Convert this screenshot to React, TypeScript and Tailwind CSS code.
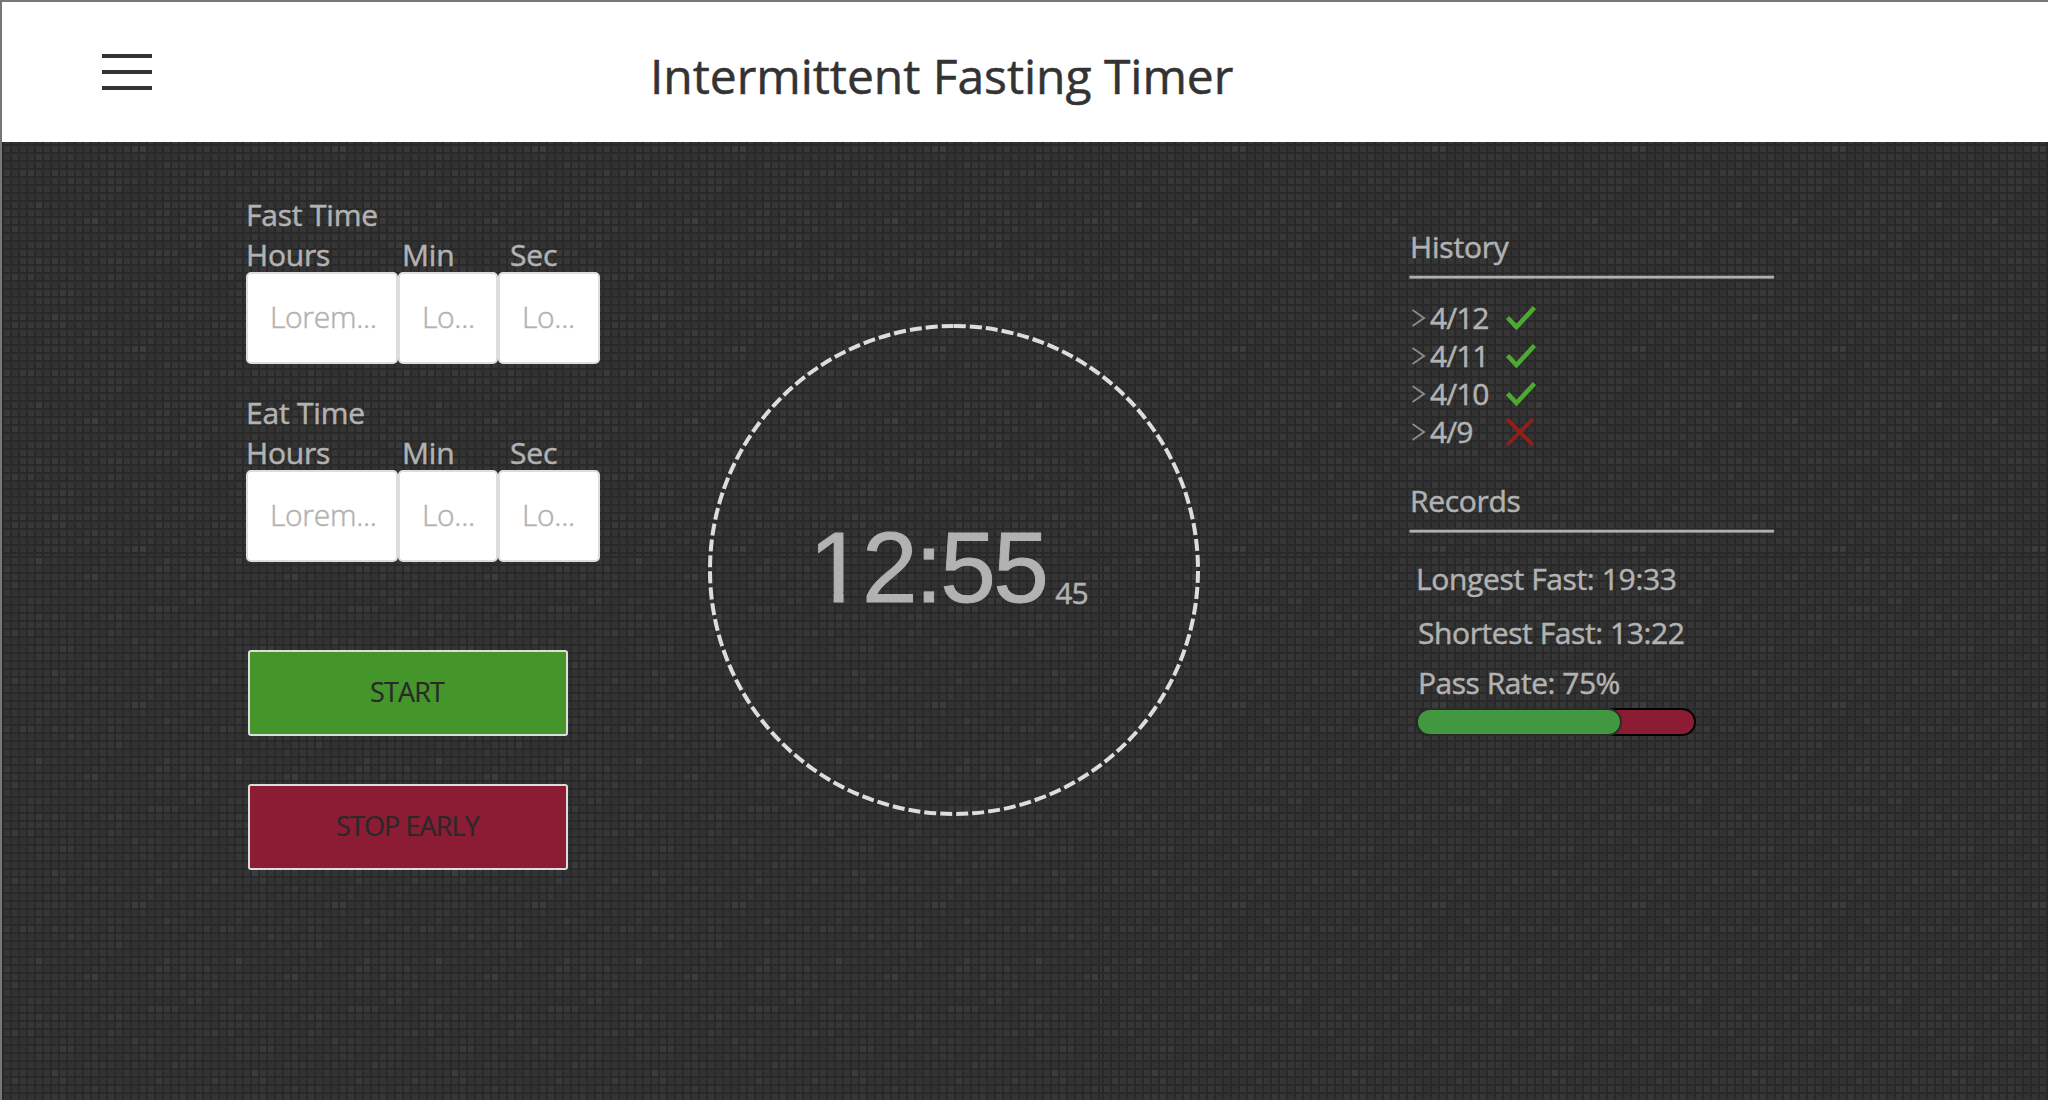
import React from "react";

const CELL = 8;
const TILE = 25;

// Cells of the backdrop tile that stand out from the rest, as [column, row].
const highlights: [number, number][] = [
  [17, 18], [16, 18], [6, 14], [4, 0], [11, 2], [10, 2], [13, 21], [3, 21], [2, 21], [6, 21],
  [14, 7], [13, 7], [8, 22], [20, 0], [4, 7], [6, 7], [11, 16], [14, 23], [0, 1], [20, 1],
  [19, 1], [1, 3], [7, 11], [8, 11], [21, 13], [1, 15], [19, 15], [7, 15], [22, 2], [18, 6],
  [19, 6], [20, 6], [21, 6], [3, 9], [1, 9], [13, 9], [20, 20], [24, 5], [23, 5], [16, 10],
  [22, 4], [0, 21],
];
const strong = 5;

const cells = Array.from({ length: TILE * TILE }, (_, i) => {
  const col = i % TILE;
  const row = Math.floor(i / TILE);
  const v = Math.abs(Math.sin(col * 12.9898 + row * 78.233) * 43758.5453) % 1;
  const shades = ["#323232", "#333333", "#353535", "#363636"];
  const rank = highlights.findIndex(([c, r]) => c === col && r === row);
  const fill = rank < 0 ? shades[Math.floor(v * 4)] : rank < strong ? "#3c3c3c" : "#393939";
  return { x: col * CELL + 4, y: row * CELL + 2, fill };
});

function Backdrop() {
  return (
    <svg className="absolute inset-0 h-full w-full" viewBox="2 142 2046 958" preserveAspectRatio="xMinYMin slice" aria-hidden="true">
      <defs>
        <pattern id="weave" width="200" height="200" patternUnits="userSpaceOnUse">
          <rect width="200" height="200" fill="#292929" />
          {cells.map((c, i) => (
            <rect key={i} x={c.x} y={c.y} width="6" height="6" fill={c.fill} />
          ))}
          {cells
            .filter((c) => c.x === 196)
            .map((c) => (
              <rect key={c.y} x="-4" y={c.y} width="6" height="6" fill={c.fill} />
            ))}
        </pattern>
        <rect id="sheet" width="1100" height="556" fill="url(#weave)" />
      </defs>
      <use href="#sheet" />
      <use href="#sheet" x="1100" />
      <use href="#sheet" y="556" />
      <use href="#sheet" x="1100" y="556" />
    </svg>
  );
}

function Field({ text, className }: { text: string; className: string }) {
  return (
    <div
      className={`h-[92px] rounded-[5px] border-2 border-[#dddddd] bg-white pl-[22px] font-light leading-[86px] tracking-[-0.3px] ${className}`}
    >
      {text}
    </div>
  );
}

function TimeFields({ title }: { title: string }) {
  return (
    <section className="h-[198px] tracking-[-0.2px]">
      <h2 className="leading-10">{title}</h2>
      <div className="flex h-[37px] leading-10">
        <span className="w-[156px]">Hours</span>
        <span className="w-[108px]">Min</span>
        <span>Sec</span>
      </div>
      <div className="flex">
        <Field text="Lorem..." className="w-[152px]" />
        <Field text="Lo..." className="w-[100px]" />
        <Field text="Lo..." className="w-[102px]" />
      </div>
    </section>
  );
}

function Check() {
  return (
    <svg width="30" height="24" viewBox="0 0 30 24" fill="none">
      <path d="M1.5 11.5 L10.5 21 L28.5 1.5" stroke="#4caa30" strokeWidth="4.6" />
    </svg>
  );
}

function Cross() {
  return (
    <svg width="28" height="28" viewBox="0 0 28 28" fill="none">
      <path d="M1 1 L27 27 M27 1 L1 27" stroke="#951f17" strokeWidth="3.6" />
    </svg>
  );
}

const history = [
  { date: "4/12", passed: true },
  { date: "4/11", passed: true },
  { date: "4/10", passed: true },
  { date: "4/9", passed: false },
];

function Rule() {
  return (
    <div className="-mt-[9px] h-[19px] whitespace-nowrap leading-5 tracking-[0.87px] [-webkit-text-stroke:0.9px]">
      {"_".repeat(26)}
    </div>
  );
}

export default function App() {
  return (
    <div className="flex h-[1100px] w-[2048px] flex-col overflow-hidden border-l-2 border-t-2 border-[#777777] bg-[#2d2d2d] font-['Open_Sans',sans-serif] text-[30px] text-[#b2b2b2] [-webkit-text-stroke:0.5px]">
      <header className="flex h-[140px] shrink-0 bg-white text-[#333333]">
        <button className="mt-[52px] ml-[100px] flex h-9 w-[50px] flex-col justify-between" aria-label="Menu">
          <span className="h-1 w-full bg-[#333333]" />
          <span className="h-1 w-full bg-[#333333]" />
          <span className="h-1 w-full bg-[#333333]" />
        </button>
        <h1 className="mt-[41px] ml-[498px] whitespace-nowrap text-[48px] leading-[66px] tracking-[-0.04px]">Intermittent Fasting Timer</h1>
      </header>

      <main className="relative flex-1">
        <Backdrop />
        <div className="relative flex">
          <div className="ml-[244px] w-[354px] pt-[53px]">
            <TimeFields title="Fast Time" />
            <TimeFields title="Eat Time" />
            <div className="mt-[59px] ml-0.5 flex w-80 flex-col gap-12 text-[27px] tracking-[-0.9px] text-[#292929] [-webkit-text-stroke:0.2px]">
              <button className="h-[86px] rounded-[3px] border-2 border-[#dddddd] bg-[#45962a] pr-0.5 pb-0.5">START</button>
              <button className="h-[86px] rounded-[3px] border-2 border-[#dddddd] bg-[#8b1c33] pr-px pb-0.5">STOP EARLY</button>
            </div>
          </div>

          <div className="relative mt-[182px] ml-[108px] h-[492px] w-[492px]">
            <svg className="absolute inset-0" width="492" height="492" viewBox="0 0 492 492" fill="none">
              <path d="M246 2 A244 244 0 1 1 245.99 2" stroke="#dddddd" strokeWidth="4" strokeDasharray="12 4" />
            </svg>
            <div className="relative flex items-start whitespace-nowrap pl-[101px]">
              <div className="mt-[188px] flex font-['Liberation_Sans',Arial,sans-serif] text-[100px] leading-[110px] tracking-[-2.6px] [-webkit-text-stroke:0.9px]">
                <span className="[clip-path:polygon(0_0,100%_0,100%_80px,34.6px_80px,34.6px_100%,24.6px_100%,24.6px_80px,0_80px)]">1</span>
                <span>2:55</span>
              </div>
              <span className="mt-[249px] ml-[9px] leading-10 tracking-[-1px]">45</span>
            </div>
          </div>

          <div className="ml-[210px] w-[370px] pt-[90px]">
            <h2 className="h-[30px] leading-[30px] tracking-[-0.2px]">History</h2>
            <Rule />
            <ul className="mt-[27px]">
              {history.map((h) => (
                <li key={h.date} className="flex h-[38px] items-center leading-[38px]">
                  <svg width="14" height="18" viewBox="0 0 14 18" fill="none" className="ml-0.5">
                    <path d="M0.5 1 L12 9 L0.5 17" stroke="#8a8a8a" strokeWidth="2" />
                  </svg>
                  <span className="ml-1 w-[76px] tracking-[-1px]">{h.date}</span>
                  {h.passed ? <Check /> : <Cross />}
                </li>
              ))}
            </ul>
            <h2 className="mt-[35px] h-[30px] leading-[30px] tracking-[-0.3px]">Records</h2>
            <Rule />
            <p className="mt-[33px] ml-[6px] leading-10 tracking-[-0.36px]">Longest Fast: 19:33</p>
            <p className="mt-[14px] ml-[8px] leading-10 tracking-[-0.42px]">Shortest Fast: 13:22</p>
            <p className="mt-[10px] ml-[8px] leading-10 tracking-[-0.48px]">Pass Rate: 75%</p>
            <div className="mt-[5px] ml-[6px] h-7 w-[280px] rounded-full border-2 border-black bg-[#8b1c33]">
              <div className="-mt-0.5 -ml-0.5 h-7 w-[206px] rounded-full border-2 border-[#2b2b2b] bg-[#429841]" />
            </div>
          </div>
        </div>
      </main>
    </div>
  );
}
